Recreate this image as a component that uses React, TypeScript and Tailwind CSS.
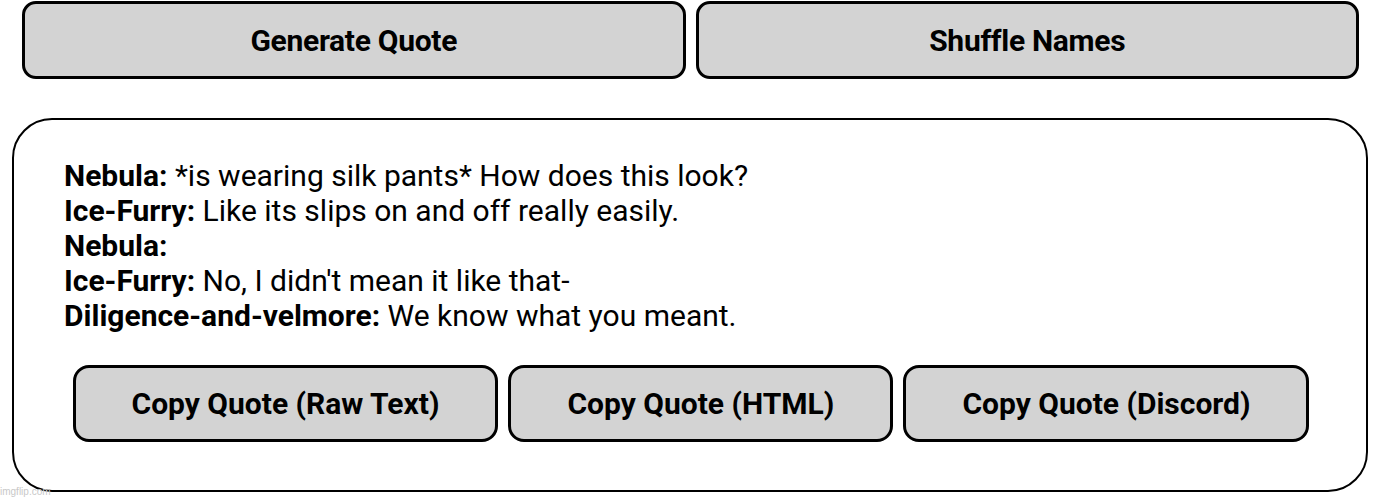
import React from "react";

const LINES: { name: string; text: string }[] = [
  { name: "Nebula:", text: "*is wearing silk pants* How does this look?" },
  { name: "Ice-Furry:", text: "Like its slips on and off really easily." },
  { name: "Nebula:", text: "" },
  { name: "Ice-Furry:", text: "No, I didn't mean it like that-" },
  { name: "Diligence-and-velmore:", text: "We know what you meant." },
];

const COPY_BUTTONS = ["Copy Quote (Raw Text)", "Copy Quote (HTML)", "Copy Quote (Discord)"];

export default function App() {
  return (
    <div className="relative w-[1392px] h-[500px] bg-white overflow-hidden text-black font-['Roboto',sans-serif]">
      <div className="flex gap-[10px] pl-[22px] pr-[33px] pt-[1px]">
        <button className="flex-1 h-[78px] bg-[#d3d3d3] border-[3px] border-black rounded-[14px] flex items-center justify-center">
          <span className="text-[30px] font-bold tracking-[-0.3px]">Generate Quote</span>
        </button>
        <button className="flex-1 h-[78px] bg-[#d3d3d3] border-[3px] border-black rounded-[14px] flex items-center justify-center">
          <span className="text-[30px] font-bold tracking-[-0.3px]">Shuffle Names</span>
        </button>
      </div>

      <div className="mt-[39px] mx-[12px] w-[1356px] h-[374px] border-2 border-black rounded-[40px] pt-[38px] pl-[50px]">
        <div className="text-[30px] leading-[35px]">
          {LINES.map((l, i) => (
            <div key={i}>
              <span className="font-bold">{l.name}</span>
              {l.text ? " " + l.text : ""}
            </div>
          ))}
        </div>
        <div className="flex justify-center gap-[10px] mt-[32px] pr-[48px]">
          {COPY_BUTTONS.map((b) => (
            <button
              key={b}
              className="h-[77px] px-[56px] bg-[#d3d3d3] border-[3px] border-black rounded-[16px] text-[30px] font-bold"
            >
              {b}
            </button>
          ))}
        </div>
      </div>

      <div className="absolute left-0 bottom-[3px] text-[10px] leading-none text-[#c8c8c8] font-['Liberation_Sans',sans-serif]">
        imgflip.com
      </div>
    </div>
  );
}
